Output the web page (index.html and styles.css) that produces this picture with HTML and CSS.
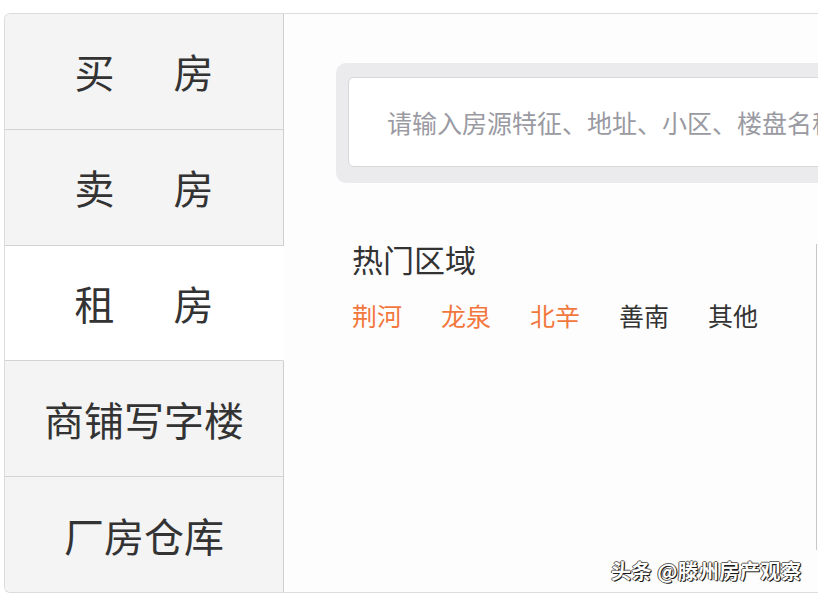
FILE: index.html
```html
<!DOCTYPE html>
<html lang="zh-CN">
<head>
<meta charset="utf-8">
<title>房产</title>
<link rel="stylesheet" href="styles.css">
</head>
<body>
<div class="frame">
  <nav class="sidebar">
    <div class="tab"><span class="split"><span>买</span><span>房</span></span></div>
    <div class="tab"><span class="split"><span>卖</span><span>房</span></span></div>
    <div class="tab active"><span class="split"><span>租</span><span>房</span></span></div>
    <div class="tab">商铺写字楼</div>
    <div class="tab">厂房仓库</div>
  </nav>
  <main class="panel">
    <div class="search-wrap">
      <div class="search-box">请输入房源特征、地址、小区、楼盘名称</div>
    </div>
    <div class="hot-row">
      <section class="hot">
        <h2 class="hot-title">热门区域</h2>
        <div class="areas">
          <a class="area hl">荆河</a>
          <a class="area hl">龙泉</a>
          <a class="area hl">北辛</a>
          <a class="area">善南</a>
          <a class="area">其他</a>
        </div>
      </section>
      <div class="side-col"></div>
    </div>
  </main>
</div>
<div class="watermark">头条 @滕州房产观察</div>
</body>
</html>
```

FILE: styles.css
```css
* { box-sizing: border-box; }
html, body { margin: 0; padding: 0; }
body {
  width: 818px;
  height: 600px;
  background: #ffffff;
  font-family: "Noto Sans CJK SC", "Noto Sans", sans-serif;
  color: #333;
  position: relative;
  overflow: hidden;
}
.frame {
  margin: 13px 0 0 4px;
  height: 580px;
  display: flex;
  border: 1px solid #dcdcdc;
  border-right: none;
  border-radius: 6px 0 0 6px;
  overflow: hidden;
}
.sidebar {
  width: 279px;
  flex: none;
  display: flex;
  flex-direction: column;
}
.tab {
  flex: 1;
  display: flex;
  align-items: center;
  justify-content: center;
  background: #f4f4f4;
  border-right: 1px solid #cfcfcf;
  border-bottom: 1px solid #d4d4d4;
  font-size: 40px;
  line-height: 1;
  color: #333;
}
.tab:last-child { border-bottom: none; }
.tab.active {
  background: #fff;
  border-right-color: transparent;
}
.split { display: flex; gap: 59px; }
.panel {
  flex: 1;
  min-width: 0;
  background: #fdfdfd;
  overflow: hidden;
}
.search-wrap {
  margin: 49px 0 0 52px;
  width: 560px;
  padding: 14px 0 16px 12px;
  background: #ebebed;
  border-radius: 10px;
}
.search-box {
  height: 90px;
  background: #fff;
  border: 1px solid #d8d8d8;
  border-radius: 6px;
  display: flex;
  align-items: center;
  padding-left: 38px;
  font-size: 25px;
  color: #9a9aa2;
  white-space: nowrap;
  overflow: hidden;
}
.hot-row {
  display: flex;
  margin: 60px 0 0 68px;
}
.hot { width: 464px; flex: none; }
.hot-title {
  margin: 0;
  font-size: 31px;
  font-weight: 400;
  line-height: 1;
  color: #333;
}
.areas {
  display: flex;
  gap: 39px;
  margin-top: 29px;
}
.area {
  font-size: 25px;
  line-height: 1;
  color: #333;
  text-decoration: none;
}
.area.hl { color: #f2773d; }
.side-col {
  flex: none;
  margin-top: 1px;
  height: 306px;
  width: 10px;
  border-left: 1px solid #c8c8c8;
}
.watermark {
  position: absolute;
  left: 611px;
  top: 559px;
  font-size: 20px;
  line-height: 24px;
  letter-spacing: 0.6px;
  color: #fff;
  font-weight: 700;
  text-shadow: 1px 1px 0 #1a1a1a, -1px 0 0 #555, 0 -1px 0 #666, 1px 0 1px #333;
  white-space: nowrap;
}
```
